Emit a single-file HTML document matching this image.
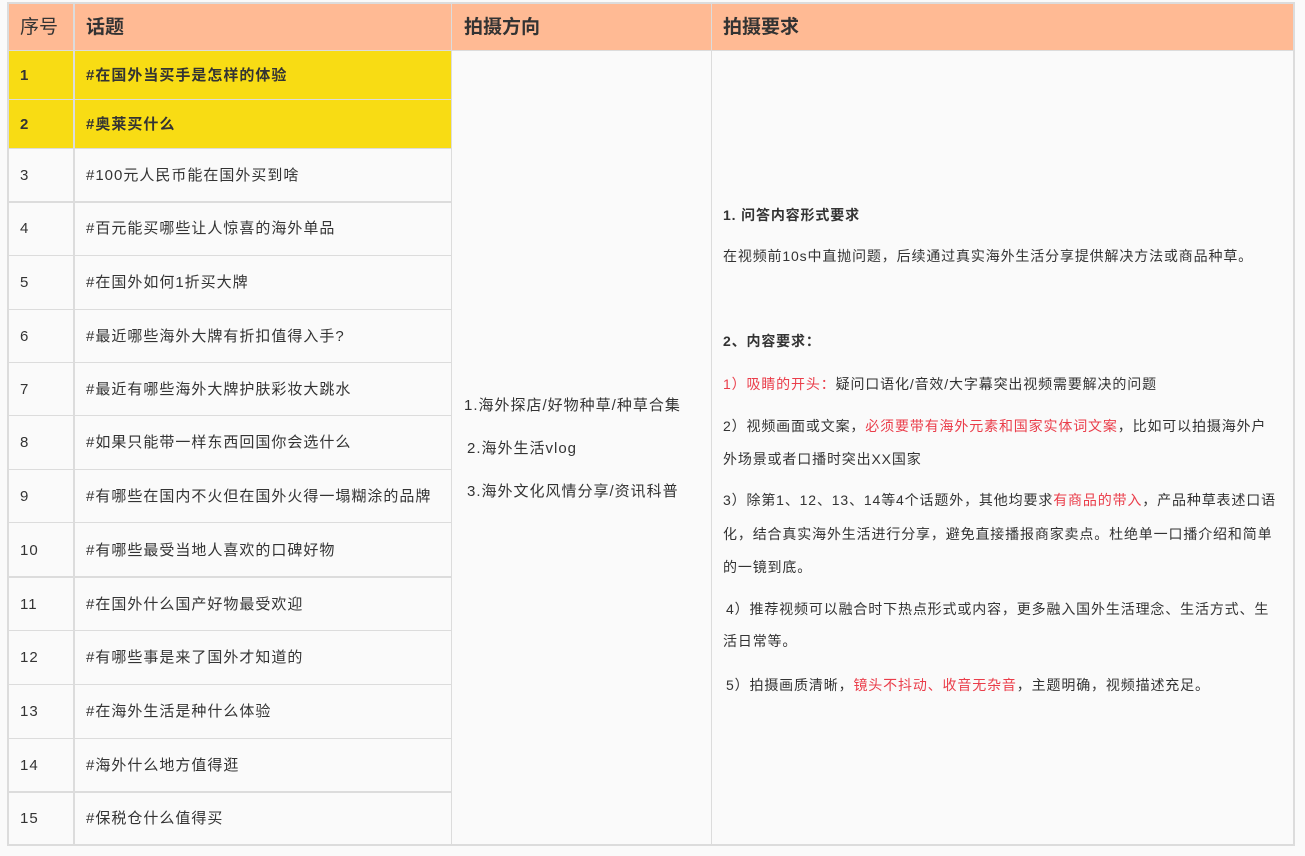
<!DOCTYPE html>
<html><head><meta charset="utf-8"><style>
*{margin:0;padding:0;box-sizing:border-box}
body{width:1305px;height:856px;background:#fafafa;position:relative;overflow:hidden;font-family:"Liberation Sans","Noto Sans CJK SC",sans-serif;color:#333}
.b{position:absolute;background:#dcdcdc}
.t{position:absolute;white-space:nowrap;line-height:20px}
.h{font-size:19px;font-weight:bold;color:#333}
.n{font-size:15px;letter-spacing:1px;color:#333}
.r{font-size:14px;letter-spacing:0.85px;color:#333}
.red{color:#ea3d4a}
</style></head><body>
<div style="position:absolute;left:7px;top:2px;width:1288px;height:49px;background:#ffba94"></div>
<div style="position:absolute;left:7px;top:51px;width:445px;height:98px;background:#f8dc14"></div>
<div class="b" style="left:7px;top:2px;width:1288px;height:2px"></div>
<div class="b" style="left:7px;top:2px;width:2px;height:844px"></div>
<div class="b" style="left:1293px;top:2px;width:2px;height:844px"></div>
<div class="b" style="left:7px;top:844px;width:1288px;height:2px"></div>
<div class="b" style="left:73px;top:2px;width:2px;height:844px"></div>
<div class="b" style="left:451px;top:2px;width:1px;height:844px"></div>
<div class="b" style="left:711px;top:2px;width:1px;height:844px"></div>
<div class="b" style="left:7px;top:50px;width:1288px;height:1px"></div>
<div class="b" style="left:7px;top:99px;width:445px;height:1px"></div>
<div class="b" style="left:7px;top:148px;width:445px;height:1px"></div>
<div class="b" style="left:7px;top:201px;width:445px;height:2px"></div>
<div class="b" style="left:7px;top:255px;width:445px;height:1px"></div>
<div class="b" style="left:7px;top:309px;width:445px;height:1px"></div>
<div class="b" style="left:7px;top:362px;width:445px;height:1px"></div>
<div class="b" style="left:7px;top:415px;width:445px;height:1px"></div>
<div class="b" style="left:7px;top:469px;width:445px;height:1px"></div>
<div class="b" style="left:7px;top:522px;width:445px;height:1px"></div>
<div class="b" style="left:7px;top:576px;width:445px;height:2px"></div>
<div class="b" style="left:7px;top:630px;width:445px;height:1px"></div>
<div class="b" style="left:7px;top:684px;width:445px;height:1px"></div>
<div class="b" style="left:7px;top:738px;width:445px;height:1px"></div>
<div class="b" style="left:7px;top:791px;width:445px;height:2px"></div>
<div class="t" style="left:20px;top:18px;font-size:19px;color:#333">序号</div>
<div class="t h" style="left:86px;top:18px">话题</div>
<div class="t h" style="left:464px;top:18px">拍摄方向</div>
<div class="t h" style="left:723px;top:18px">拍摄要求</div>
<div class="t n" style="left:20px;top:66px;font-weight:bold">1</div><div class="t n" style="left:86px;top:66px;font-weight:bold">#在国外当买手是怎样的体验</div>
<div class="t n" style="left:20px;top:115px;font-weight:bold">2</div><div class="t n" style="left:86px;top:115px;font-weight:bold">#奥莱买什么</div>
<div class="t n" style="left:20px;top:166px">3</div><div class="t n" style="left:86px;top:166px">#100元人民币能在国外买到啥</div>
<div class="t n" style="left:20px;top:219px">4</div><div class="t n" style="left:86px;top:219px">#百元能买哪些让人惊喜的海外单品</div>
<div class="t n" style="left:20px;top:273px">5</div><div class="t n" style="left:86px;top:273px">#在国外如何1折买大牌</div>
<div class="t n" style="left:20px;top:327px">6</div><div class="t n" style="left:86px;top:327px">#最近哪些海外大牌有折扣值得入手?</div>
<div class="t n" style="left:20px;top:380px">7</div><div class="t n" style="left:86px;top:380px">#最近有哪些海外大牌护肤彩妆大跳水</div>
<div class="t n" style="left:20px;top:433px">8</div><div class="t n" style="left:86px;top:433px">#如果只能带一样东西回国你会选什么</div>
<div class="t n" style="left:20px;top:487px">9</div><div class="t n" style="left:86px;top:487px">#有哪些在国内不火但在国外火得一塌糊涂的品牌</div>
<div class="t n" style="left:20px;top:541px">10</div><div class="t n" style="left:86px;top:541px">#有哪些最受当地人喜欢的口碑好物</div>
<div class="t n" style="left:20px;top:595px">11</div><div class="t n" style="left:86px;top:595px">#在国外什么国产好物最受欢迎</div>
<div class="t n" style="left:20px;top:648px">12</div><div class="t n" style="left:86px;top:648px">#有哪些事是来了国外才知道的</div>
<div class="t n" style="left:20px;top:702px">13</div><div class="t n" style="left:86px;top:702px">#在海外生活是种什么体验</div>
<div class="t n" style="left:20px;top:756px">14</div><div class="t n" style="left:86px;top:756px">#海外什么地方值得逛</div>
<div class="t n" style="left:20px;top:809px">15</div><div class="t n" style="left:86px;top:809px">#保税仓什么值得买</div>
<div class="t n" style="left:464px;top:396px">1.海外探店/好物种草/种草合集</div>
<div class="t n" style="left:467px;top:439px">2.海外生活vlog</div>
<div class="t n" style="left:467px;top:482px">3.海外文化风情分享/资讯科普</div>
<div class="t r" style="left:723px;top:205px;font-weight:bold">1. 问答内容形式要求</div>
<div class="t r" style="left:723px;top:246px">在视频前10s中直抛问题，后续通过真实海外生活分享提供解决方法或商品种草。</div>
<div class="t r" style="left:723px;top:331px;font-weight:bold">2、内容要求：</div>
<div class="t r" style="left:723px;top:374px"><span class="red">1）吸睛的开头：</span>疑问口语化/音效/大字幕突出视频需要解决的问题</div>
<div class="t r" style="left:723px;top:416px">2）视频画面或文案，<span class="red">必须要带有海外元素和国家实体词文案</span>，比如可以拍摄海外户</div>
<div class="t r" style="left:723px;top:449px">外场景或者口播时突出XX国家</div>
<div class="t r" style="left:723px;top:490px">3）除第1、12、13、14等4个话题外，其他均要求<span class="red">有商品的带入</span>，产品种草表述口语</div>
<div class="t r" style="left:723px;top:524px">化，结合真实海外生活进行分享，避免直接播报商家卖点。杜绝单一口播介绍和简单</div>
<div class="t r" style="left:723px;top:557px">的一镜到底。</div>
<div class="t r" style="left:726px;top:599px">4）推荐视频可以融合时下热点形式或内容，更多融入国外生活理念、生活方式、生</div>
<div class="t r" style="left:723px;top:631px">活日常等。</div>
<div class="t r" style="left:726px;top:675px">5）拍摄画质清晰，<span class="red">镜头不抖动、收音无杂音</span>，主题明确，视频描述充足。</div>
</body></html>
